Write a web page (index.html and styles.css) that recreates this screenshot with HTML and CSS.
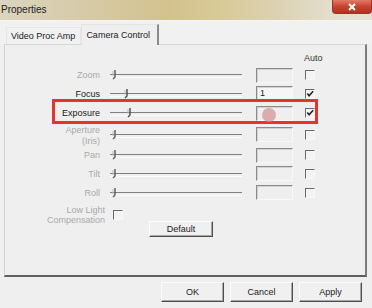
FILE: index.html
```html
<!DOCTYPE html>
<html>
<head>
<meta charset="utf-8">
<link rel="stylesheet" href="styles.css">
</head>
<body>
<div class="window">
  <div class="titlebar">
    <span class="title">Properties</span>
    <span class="close"><svg width="10" height="8" viewBox="0 0 10 8"><path d="M2 1 L8 7 M8 1 L2 7" stroke="#fff" stroke-width="2"/></svg></span>
  </div>
  <div class="tabs">
    <div class="tab">Video Proc Amp</div>
    <div class="tab active">Camera Control</div>
  </div>
  <div class="panel">
    <div class="grid">
      <div class="hdr">Auto</div>

      <div class="lbl dis">Zoom</div>
      <div class="slider"><svg class="thumb" style="left:1px" width="6" height="10" viewBox="0 0 6 10"><path d="M4 0 V7 L2 9" stroke="#5a5a5a" stroke-width="1.4" fill="none"/><path d="M2 1 V6" stroke="#bbb" stroke-width="1"/></svg></div>
      <div class="box"></div>
      <div class="chk"></div>

      <div class="lbl">Focus</div>
      <div class="slider"><svg class="thumb" style="left:13px" width="6" height="10" viewBox="0 0 6 10"><path d="M4 0 V7 L2 9" stroke="#4a4a4a" stroke-width="1.4" fill="none"/><path d="M2 1 V6" stroke="#bbb" stroke-width="1"/></svg></div>
      <div class="box on">1</div>
      <div class="chk checked"><svg width="9" height="8" viewBox="0 0 9 8"><path d="M1.5 3.5 L3.5 6 L8 1" stroke="#222" stroke-width="1.8" fill="none"/></svg></div>

      <div class="lbl">Exposure</div>
      <div class="slider"><svg class="thumb" style="left:16px" width="6" height="10" viewBox="0 0 6 10"><path d="M4 0 V7 L2 9" stroke="#4a4a4a" stroke-width="1.4" fill="none"/><path d="M2 1 V6" stroke="#bbb" stroke-width="1"/></svg></div>
      <div class="box"></div>
      <div class="chk checked"><svg width="9" height="8" viewBox="0 0 9 8"><path d="M1.5 3.5 L3.5 6 L8 1" stroke="#222" stroke-width="1.8" fill="none"/></svg></div>

      <div class="lbl dis two">Aperture<br>(Iris)</div>
      <div class="slider"><svg class="thumb" style="left:1px" width="6" height="10" viewBox="0 0 6 10"><path d="M4 0 V7 L2 9" stroke="#5a5a5a" stroke-width="1.4" fill="none"/><path d="M2 1 V6" stroke="#bbb" stroke-width="1"/></svg></div>
      <div class="box"></div>
      <div class="chk"></div>

      <div class="lbl dis">Pan</div>
      <div class="slider"><svg class="thumb" style="left:1px" width="6" height="10" viewBox="0 0 6 10"><path d="M4 0 V7 L2 9" stroke="#5a5a5a" stroke-width="1.4" fill="none"/><path d="M2 1 V6" stroke="#bbb" stroke-width="1"/></svg></div>
      <div class="box"></div>
      <div class="chk"></div>

      <div class="lbl dis">Tilt</div>
      <div class="slider"><svg class="thumb" style="left:1px" width="6" height="10" viewBox="0 0 6 10"><path d="M4 0 V7 L2 9" stroke="#5a5a5a" stroke-width="1.4" fill="none"/><path d="M2 1 V6" stroke="#bbb" stroke-width="1"/></svg></div>
      <div class="box"></div>
      <div class="chk"></div>

      <div class="lbl dis">Roll</div>
      <div class="slider"><svg class="thumb" style="left:1px" width="6" height="10" viewBox="0 0 6 10"><path d="M4 0 V7 L2 9" stroke="#5a5a5a" stroke-width="1.4" fill="none"/><path d="M2 1 V6" stroke="#bbb" stroke-width="1"/></svg></div>
      <div class="box"></div>
      <div class="chk"></div>

      <div class="lbl dis ll">Low Light<br>Compensation</div>
      <div class="chk llchk"></div>
      <div class="btn defbtn">Default</div>
    </div>
  </div>
  <div class="buttons">
    <div class="btn">OK</div>
    <div class="btn">Cancel</div>
    <div class="btn">Apply</div>
  </div>
  <div class="highlight"></div>
  <div class="cursor"></div>
</div>
</body>
</html>
```

FILE: styles.css
```css
* { box-sizing: border-box; }
html, body {
  margin: 0;
  padding: 0;
  width: 372px;
  height: 308px;
  overflow: hidden;
  background: #efefef;
  font-family: "Liberation Sans", Arial, sans-serif;
  font-size: 9px;
  color: #1a1a1a;
}
.window {
  position: relative;
  width: 372px;
  height: 308px;
  background: #efefef;
}
.titlebar {
  height: 21px;
  display: flex;
  justify-content: space-between;
  align-items: flex-start;
  background: linear-gradient(90deg, #dcd5bf 0%, #d6cba8 22%, #d3c28e 45%, #d8c996 58%, #dcd2b2 74%, #e3ddca 88%, #e6e1d3 100%);
  border-bottom: 1px solid #f6f4ee;
}
.title {
  font-size: 10px;
  line-height: 20px;
  padding-left: 1px;
  color: #222;
}
.close {
  width: 40px;
  height: 14px;
  display: flex;
  align-items: center;
  justify-content: center;
  background: linear-gradient(#e27a68, #c9432f 50%, #b5301f);
  border: 1px solid #8d3a2c;
  border-top: none;
  border-radius: 0 0 4px 4px;
}
.tabs {
  height: 23px;
  display: flex;
  align-items: flex-end;
  padding-left: 6px;
  background: #f1f1f1;
}
.tab {
  height: 17px;
  line-height: 17px;
  padding: 0 5px 0 4px;
  border: 1px solid #e6e6e6;
  border-bottom: none;
  color: #222;
}
.tab.active {
  position: relative;
  z-index: 1;
  height: 21px;
  line-height: 20px;
  padding: 0 7px 0 4px;
  margin-bottom: -1px;
  background: #efefef;
  border-color: #e4e4e4 #8a8a8a #efefef #e4e4e4;
  border-right-width: 2px;
}
.panel {
  margin-left: 4px;
  width: 363px;
  height: 233px;
  border: 1px solid;
  border-color: #d6d6d6 #7c7c7c #5e5e5e #d2d2d2;
  border-right-width: 2px;
  border-bottom-width: 2px;
  padding: 5px 0 0 15px;
}
.grid {
  display: grid;
  grid-template-columns: 88px 148px 49px 11px;
  grid-template-rows: 16px 18px 19px 20px 23px 18px 19px 19px 19px 16px;
  align-items: center;
}
.hdr {
  grid-column: 4;
  justify-self: start;
  margin-left: -1px;
  white-space: nowrap;
  color: #333;
}
.lbl {
  justify-self: end;
  padding-right: 8px;
  text-align: right;
  line-height: 10px;
  white-space: nowrap;
}
.lbl.dis { color: #a9a9a9; }
.lbl.two { margin-top: 3px; line-height: 11px; }
.lbl.ll {
  grid-row: 9 / span 2;
  align-self: start;
  margin-top: 3px;
  margin-right: -5px;
}
.slider {
  position: relative;
  margin-left: 2px;
  width: 132px;
  height: 10px;
}
.slider::before {
  content: "";
  position: absolute;
  left: 0;
  right: 0;
  top: 4px;
  height: 2px;
  border-top: 1px solid #808080;
  border-bottom: 1px solid #fdfdfd;
}
.thumb {
  position: absolute;
  top: 0;
}
.box {
  width: 37px;
  height: 15px;
  border: 1px solid;
  border-color: #8a8a8a #f8f8f8 #f8f8f8 #8a8a8a;
  box-shadow: inset 1px 1px 0 #d2d2d2;
  background: #efefef;
  font-size: 9px;
  line-height: 12px;
  padding-left: 3px;
}
.box.on { background: #f6f6f6; }
.chk {
  width: 10px;
  height: 10px;
  border: 1px solid;
  border-color: #6a6a6a #f8f8f8 #f8f8f8 #6a6a6a;
  background: #f3f3f3;
  display: flex;
  align-items: center;
  justify-content: center;
}
.llchk {
  grid-row: 9;
  grid-column: 2;
  align-self: end;
  margin-left: 5px;
  margin-bottom: 1px;
}
.btn {
  display: flex;
  align-items: center;
  justify-content: center;
  border: 1px solid;
  border-color: #fbfbfb #4e4e4e #4e4e4e #fbfbfb;
  box-shadow: inset -1px -1px 0 #a8a8a8;
  background: #f0f0f0;
  color: #1a1a1a;
}
.defbtn {
  grid-row: 10;
  grid-column: 2;
  justify-self: start;
  margin-left: 41px;
  width: 64px;
  height: 16px;
}
.buttons {
  display: flex;
  justify-content: flex-end;
  gap: 6px;
  margin-top: 5px;
  padding-right: 10px;
}
.buttons .btn {
  width: 63px;
  height: 20px;
}
.highlight {
  position: absolute;
  left: 52px;
  top: 99px;
  width: 266px;
  height: 25px;
  border: 3px solid #e5342c;
}
.cursor {
  position: absolute;
  left: 262px;
  top: 108px;
  width: 14px;
  height: 14px;
  border-radius: 50%;
  background: rgba(214, 150, 150, 0.75);
}
```
